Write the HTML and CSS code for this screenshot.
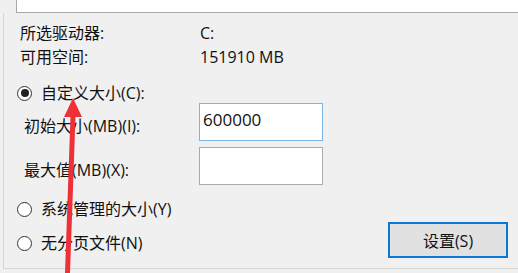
FILE: index.html
```html
<!DOCTYPE html>
<html lang="zh-CN">
<head>
  <meta charset="UTF-8">
  <meta name="viewport" content="width=device-width, initial-scale=1.0">
  <title>虚拟内存</title>
  <link rel="stylesheet" href="styles.css">
</head>
<body>

  <div class="drive-list"></div>

  <div class="group">
    <div class="info">
      <span>所选驱动器:</span><span>C:</span>
      <span>可用空间:</span><span>151910 MB</span>
    </div>

    <label class="radio-row first">
      <span class="radio checked"></span>自定义大小(C):
    </label>

    <div class="sizes">
      <label for="initSize">初始大小(MB)(I):</label>
      <input type="text" id="initSize" class="focused" value="600000">

      <label for="maxSize">最大值(MB)(X):</label>
      <input type="text" id="maxSize" value="">
    </div>

    <label class="radio-row second">
      <span class="radio"></span>系统管理的大小(Y)
    </label>

    <div class="last-row">
      <label class="radio-row third">
        <span class="radio"></span>无分页文件(N)
      </label>
      <button type="button">设置(S)</button>
    </div>
  </div>

  <!-- flèche rouge par-dessus la capture -->
  <svg class="arrow" width="518" height="273" viewBox="0 0 518 273">
    <polygon points="73,98 64,117 82,117" fill="#ee3038"/>
    <polygon points="70.5,116 75.5,116 70,273 65,273" fill="#ee3038"/>
  </svg>

</body>
</html>
```

FILE: styles.css
```css
body {
  font-family: "Open Sans", "Noto Sans CJK SC", sans-serif;
  font-size: 16px;
  background-color: #f0f0f0;
  color: #111;
  margin: 0;
  padding: 0;
  width: 518px;
  height: 273px;
  overflow: hidden;
  position: relative;
}

.drive-list {
  margin-left: 16px;
  height: 12px;
  background-color: #fff;
  border-left: 1px solid #a8a8a8;
  border-bottom: 1px solid #a8a8a8;
}

.group {
  margin-left: 3px;
  border-left: 1px solid #d6d6d6;
  border-bottom: 1px solid #d6d6d6;
  padding: 10px 10px 9px 16px;
  box-sizing: border-box;
  height: 256px;
}

.info {
  display: grid;
  grid-template-columns: 180px auto;
  row-gap: 4px;
  line-height: 20px;
}

.radio-row {
  display: flex;
  align-items: center;
  gap: 9px;
  margin-left: -3px;
  line-height: 20px;
  height: 20px;
}

.radio-row.first {
  margin-top: 16px;
}

.radio-row.second {
  margin-top: 14px;
}

.radio {
  width: 15px;
  height: 15px;
  box-sizing: border-box;
  border: 1.5px solid #333;
  border-radius: 50%;
  background-color: #fff;
  display: flex;
  align-items: center;
  justify-content: center;
}

.radio.checked::after {
  content: "";
  width: 8px;
  height: 8px;
  border-radius: 50%;
  background-color: #222;
}

.sizes {
  display: grid;
  grid-template-columns: 179px 124px;
  row-gap: 6px;
  align-items: center;
}

.sizes label {
  padding-left: 4px;
  padding-top: 5px;
}

.sizes input {
  width: 124px;
  height: 38px;
  box-sizing: border-box;
  border: 1px solid #a9a9a9;
  background-color: #fff;
  font-family: "Open Sans", "Noto Sans CJK SC", sans-serif;
  font-size: 17px;
  color: #111;
  padding: 0 3px 5px;
  margin: 0;
  outline: none;
}

.sizes input.focused {
  border-color: #7ab3e6;
}

.last-row {
  display: flex;
  justify-content: space-between;
  margin-top: 3px;
  height: 36px;
}

.radio-row.third {
  margin-top: 11px;
}

.last-row button {
  width: 120px;
  height: 36px;
  border: 2px solid #0a78d4;
  background-color: #e1e1e1;
  font-family: "Open Sans", "Noto Sans CJK SC", sans-serif;
  font-size: 16px;
  color: #111;
  padding: 0;
  margin: 0;
}

.arrow {
  position: absolute;
  left: 0;
  top: 0;
  pointer-events: none;
}
```
